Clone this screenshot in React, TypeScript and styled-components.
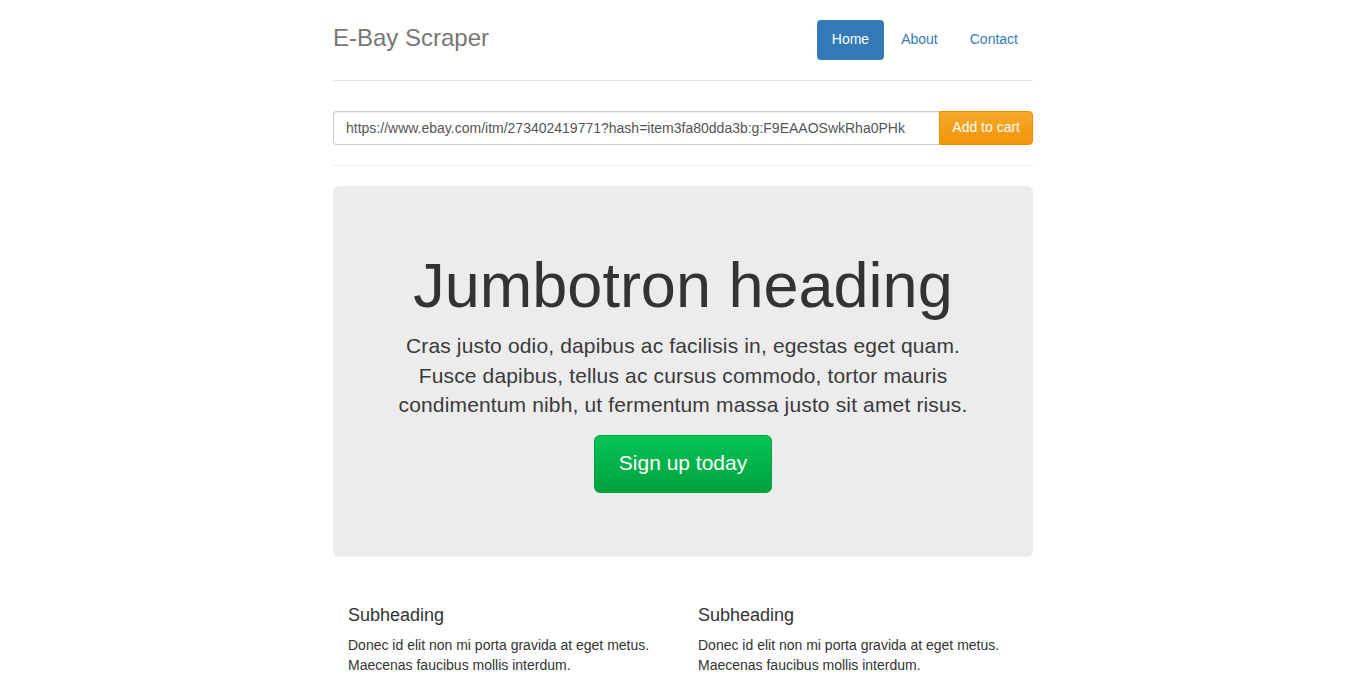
import React from 'react'
import styled, { createGlobalStyle } from 'styled-components'

const GlobalStyle = createGlobalStyle`
  * {
    box-sizing: border-box;
  }
  html, body {
    margin: 0;
    background: #fff;
  }
  body {
    padding-top: 20px;
    padding-bottom: 20px;
    font-family: "Liberation Sans", Arial, Helvetica, sans-serif;
    font-size: 14px;
    line-height: 1.42857;
    color: #333;
  }
`

const Container = styled.div`
  max-width: 730px;
  margin: 0 auto;
  padding: 0 15px;
`

const Header = styled.div`
  display: flex;
  justify-content: space-between;
  align-items: flex-start;
  padding-bottom: 20px;
  border-bottom: 1px solid #e5e5e5;
  margin-bottom: 30px;
`

const Brand = styled.h3`
  margin: 0;
  font-size: 24px;
  font-weight: 500;
  line-height: 36px;
  color: #777;
`

const Pills = styled.ul`
  display: flex;
  list-style: none;
  margin: 0;
  padding: 0;
  gap: 2px;
`

const Pill = styled.a<{ $active?: boolean }>`
  display: block;
  padding: 9px 15px 11px;
  border-radius: 4px;
  text-decoration: none;
  line-height: 20px;
  color: ${({ $active }) => ($active ? '#fff' : '#337ab7')};
  background: ${({ $active }) => ($active ? '#337ab7' : 'transparent')};
  cursor: pointer;
`

const InputGroup = styled.div`
  display: flex;
  width: 100%;
`

const UrlInput = styled.input`
  flex: 1;
  height: 34px;
  padding: 6px 12px;
  font-family: inherit;
  font-size: 14px;
  color: #555;
  border: 1px solid #ccc;
  border-right: none;
  border-radius: 4px 0 0 4px;
  box-shadow: inset 0 1px 1px rgba(0, 0, 0, 0.075);
  outline: none;
`

const CartButton = styled.button`
  height: 34px;
  padding: 5px 12px 7px;
  font-family: inherit;
  font-size: 14px;
  color: #fff;
  background-image: linear-gradient(to bottom, #f8a82a 0%, #f29509 100%);
  border: 1px solid #e8900e;
  border-radius: 0 4px 4px 0;
  white-space: nowrap;
  cursor: pointer;
`

const Rule = styled.hr`
  margin: 20px 0;
  border: 0;
  border-top: 1px solid #eee;
`

const Jumbotron = styled.div`
  background: #ececec;
  border-radius: 6px;
  padding: 48px 60px;
  margin-bottom: 30px;
  text-align: center;

  h1 {
    margin: 17px 0 11px;
    font-size: 63px;
    font-weight: 500;
    line-height: 1.1;
    color: #333;
  }

  p {
    margin: 0 0 16px;
    font-size: 21px;
    font-weight: 200;
    line-height: 1.4;
    letter-spacing: 0.15px;
    color: #3a3a3a;
  }
`

const SignUp = styled.a`
  display: inline-block;
  padding: 13px 24px 15px;
  font-size: 21px;
  line-height: 1.33;
  letter-spacing: 0;
  color: #fff;
  text-decoration: none;
  border-radius: 6px;
  border: 1px solid #00a03c;
  background-image: linear-gradient(to bottom, #04c456 0%, #00a13e 100%);
  cursor: pointer;
`

const Marketing = styled.div`
  display: grid;
  grid-template-columns: 1fr 1fr;
  margin: 40px 0;
`

const Column = styled.div`
  padding: 0 15px;

  h4 {
    margin: 9px 0 10px;
    font-size: 18px;
    font-weight: 500;
    line-height: 1.1;
    color: #333;
  }

  p {
    margin: 0 0 10px;
  }
`

const items = [
  { title: 'Subheading', text: 'Donec id elit non mi porta gravida at eget metus. Maecenas faucibus mollis interdum.' },
  { title: 'Subheading', text: 'Donec id elit non mi porta gravida at eget metus. Maecenas faucibus mollis interdum.' },
]

export default function App() {
  return (
    <>
      <GlobalStyle />
      <Container>
        <Header>
          <Brand>E-Bay Scraper</Brand>
          <Pills>
            <li><Pill $active>Home</Pill></li>
            <li><Pill>About</Pill></li>
            <li><Pill>Contact</Pill></li>
          </Pills>
        </Header>

        <InputGroup>
          <UrlInput
            type="text"
            defaultValue="https://www.ebay.com/itm/273402419771?hash=item3fa80dda3b:g:F9EAAOSwkRha0PHk"
          />
          <CartButton>Add to cart</CartButton>
        </InputGroup>

        <Rule />

        <Jumbotron>
          <h1>Jumbotron heading</h1>
          <p>
            Cras justo odio, dapibus ac facilisis in, egestas eget quam. Fusce dapibus, tellus ac cursus commodo,
            tortor mauris condimentum nibh, ut fermentum massa justo sit amet risus.
          </p>
          <p>
            <SignUp>Sign up today</SignUp>
          </p>
        </Jumbotron>

        <Marketing>
          {items.map((item, i) => (
            <Column key={i}>
              <h4>{item.title}</h4>
              <p>{item.text}</p>
            </Column>
          ))}
        </Marketing>
      </Container>
    </>
  )
}
